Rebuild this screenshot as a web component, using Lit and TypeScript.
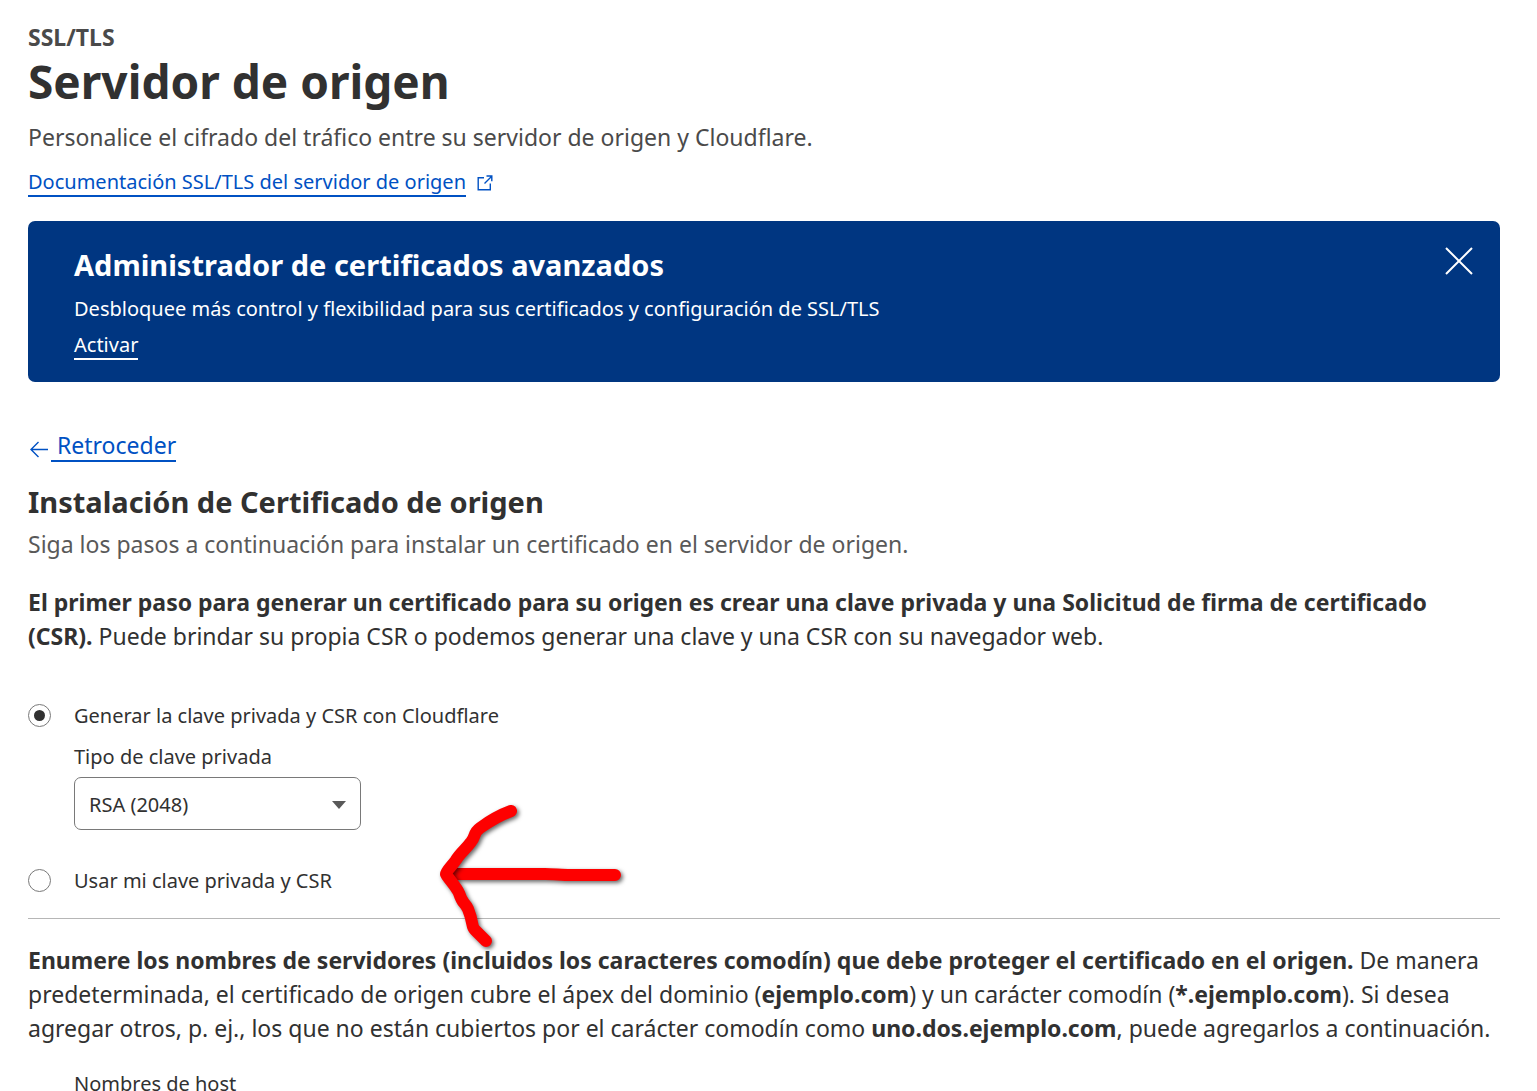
import { LitElement, html, css } from "lit";
import { customElement, state } from "lit/decorators.js";

@customElement("app-root")
export class AppRoot extends LitElement {
  static styles = css`
    :host {
      display: block;
      position: relative;
      min-height: 100vh;
      box-sizing: border-box;
      padding: 20px 37px 24px 28px;
      background: #fff;
      color: #313131;
      font-family: "Noto Sans", "Liberation Sans", sans-serif;
      font-size: 20px;
      line-height: 30px;
    }
    h1, h2, p { margin: 0; }
    a { color: #0051c3; text-decoration: none; }
    .section {
      font-size: 23px;
      line-height: 34px;
      font-weight: 700;
      color: #4a4a4a;
    }
    h1 { font-size: 46px; line-height: 54px; font-weight: 700; }
    .lead {
      margin-top: 12px;
      font-size: 23px;
      line-height: 34px;
      color: #4a4a4a;
    }
    .doc {
      display: flex;
      align-items: center;
      gap: 11px;
      margin-top: 15px;
    }
    .underlined {
      display: inline-block;
      line-height: 26px;
      border-bottom: 2px solid currentColor;
    }
    svg { display: block; flex: none; }
    .banner {
      display: flex;
      justify-content: space-between;
      align-items: flex-start;
      margin-top: 24px;
      padding: 22px 24px 22px 46px;
      border-radius: 7px;
      background: #003681;
      color: #fff;
    }
    .banner-body { display: flex; flex-direction: column; align-items: flex-start; }
    .banner h2 { font-size: 29px; line-height: 44px; font-weight: 700; }
    .banner p { margin-top: 7px; }
    .banner a { margin-top: 8px; color: #fff; }
    .close {
      margin-top: 1px;
      padding: 0;
      border: 0;
      background: none;
      color: #fff;
      cursor: pointer;
    }
    .back {
      display: flex;
      align-items: flex-start;
      margin-top: 48px;
      font-size: 23px;
    }
    .back svg { margin-top: 9px; }
    .back .underlined { line-height: 30px; padding-left: 6px; }
    .heading {
      margin-top: 18px;
      font-size: 29px;
      line-height: 44px;
      font-weight: 700;
    }
    .hint {
      margin-top: 3px;
      font-size: 23px;
      line-height: 34px;
      color: #595959;
    }
    .text {
      margin-top: 24px;
      padding-right: 8px;
      font-size: 23px;
      line-height: 34px;
    }
    b { font-weight: 700; }
    form { margin: 0; }
    .option { display: flex; align-items: flex-start; gap: 23px; }
    .first { margin-top: 48px; }
    .second { margin-top: 36px; }
    input {
      appearance: none;
      display: grid;
      place-items: center;
      flex: none;
      width: 23px;
      height: 23px;
      margin: 3px 0 0;
      border: 1px solid #797979;
      border-radius: 50%;
      background: #fff;
    }
    input:checked::before {
      content: "";
      width: 11px;
      height: 11px;
      border-radius: 50%;
      background: #313131;
    }
    .field {
      display: flex;
      flex-direction: column;
      align-items: flex-start;
      gap: 5px;
      margin-top: 11px;
      padding-left: 46px;
    }
    .select { display: grid; align-items: center; }
    .select > * { grid-area: 1 / 1; }
    .select svg { justify-self: end; margin: 2px 15px 0 0; pointer-events: none; }
    select {
      appearance: none;
      width: 287px;
      height: 53px;
      padding: 2px 40px 0 14px;
      border: 1px solid #797979;
      border-radius: 7px;
      background: #fff;
      color: inherit;
      font: inherit;
    }
    hr {
      height: 1px;
      margin: 22px 0 0;
      border: 0;
      background: #b6b6b6;
    }
    .hosts { margin-top: 24px; }
    textarea {
      align-self: stretch;
      height: 80px;
      border: 1px solid #797979;
      border-radius: 7px;
      font: inherit;
    }
    .mark { position: absolute; left: 430px; top: 795px; pointer-events: none; }
    .mark path {
      fill: none;
      stroke: #fe0000;
      stroke-width: 12;
      stroke-linecap: round;
      stroke-linejoin: round;
      filter: drop-shadow(2px 2px 2px rgba(0, 0, 0, 0.6));
    }
  `;

  @state() private source = "cloudflare";

  private radio(value: string, label: string, place: string) {
    return html`
      <div class="option ${place}">
        <input
          type="radio"
          name="source"
          id=${value}
          .value=${value}
          .checked=${this.source === value}
          @change=${() => (this.source = value)}
        />
        <label for=${value}>${label}</label>
      </div>
    `;
  }

  render() {
    return html`
      <header>
        <p class="section">SSL/TLS</p>
        <h1>Servidor de origen</h1>
        <p class="lead">Personalice el cifrado del tráfico entre su servidor de origen y Cloudflare.</p>
        <div class="doc">
          <a class="underlined" href="#docs">Documentación SSL/TLS del servidor de origen</a>
          <svg width="16" height="16" viewBox="0 0 16 16" fill="none" stroke="#0051c3" stroke-width="1.4" aria-hidden="true">
            <path d="M7 2.7H1.2V14.8H13.3V8.5M7.500 8.500L14.5 1.5M9.5 1H14.8V6.3" />
          </svg>
        </div>
      </header>

      <section class="banner">
        <div class="banner-body">
          <h2>Administrador de certificados avanzados</h2>
          <p>Desbloquee más control y flexibilidad para sus certificados y configuración de SSL/TLS</p>
          <a class="underlined" href="#activar">Activar</a>
        </div>
        <button class="close" type="button" aria-label="Cerrar">
          <svg width="34" height="34" viewBox="0 0 34 34" stroke="currentColor" stroke-width="2" aria-hidden="true">
            <path d="M4 4L30 30M30 4L4 30" />
          </svg>
        </button>
      </section>

      <main>
        <div class="back">
          <svg width="23" height="20" viewBox="0 0 23 20" fill="none" stroke="#0051c3" stroke-width="1.4" aria-hidden="true">
            <path d="M20 10.5H3M10.5 3L3 10.5L10.5 18" />
          </svg>
          <a class="underlined" href="#back">Retroceder</a>
        </div>
        <h2 class="heading">Instalación de Certificado de origen</h2>
        <p class="hint">Siga los pasos a continuación para instalar un certificado en el servidor de origen.</p>
        <p class="text"><b>El primer paso para generar un certificado para su origen es crear una clave privada y una Solicitud de firma de certificado (CSR).</b> Puede brindar su propia CSR o podemos generar una clave y una CSR con su navegador web.</p>

        <form>
          ${this.radio("cloudflare", "Generar la clave privada y CSR con Cloudflare", "first")}
          <div class="field">
            <label for="key-type">Tipo de clave privada</label>
            <div class="select">
              <select id="key-type"><option>RSA (2048)</option></select>
              <svg width="14" height="8" viewBox="0 0 14 8" fill="#595959" aria-hidden="true">
                <path d="M0 0H14L7 8Z" />
              </svg>
            </div>
          </div>
          ${this.radio("own", "Usar mi clave privada y CSR", "second")}
          <hr />
          <p class="text"><b>Enumere los nombres de servidores (incluidos los caracteres comodín) que debe proteger el certificado en el origen.</b> De manera predeterminada, el certificado de origen cubre el ápex del dominio (<b>ejemplo.com</b>) y un carácter comodín (<b>*.ejemplo.com</b>). Si desea agregar otros, p. ej., los que no están cubiertos por el carácter comodín como <b>uno.dos.ejemplo.com</b>, puede agregarlos a continuación.</p>
          <div class="field hosts">
            <label for="hosts">Nombres de host</label>
            <textarea id="hosts"></textarea>
          </div>
        </form>
      </main>

      <svg class="mark" width="210" height="165" viewBox="430 795 210 165" aria-hidden="true">
        <path d="M455 874H545C553 874 562 875 570 875H615" />
        <path d="M511 811C500 815 491 820 480 828C473 833 476 836 471 842C466 849 460 853 456 860C452 866 446 871 446 874C447 877 456 886 459 893C463 905 464 901 468 909C474 924 471 926 475 930L486 941" />
      </svg>
    `;
  }
}
